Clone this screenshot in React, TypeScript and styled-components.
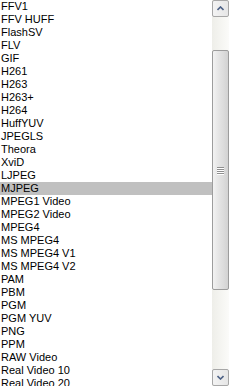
import React from 'react'
import styled, { createGlobalStyle } from 'styled-components'

const Global = createGlobalStyle`
  html, body { margin: 0; padding: 0; background: #fff; }
  body { font-family: Tahoma, "Liberation Sans", "DejaVu Sans", sans-serif; }
`

const codecs = [
  'FFV1', 'FFV HUFF', 'FlashSV', 'FLV', 'GIF', 'H261', 'H263', 'H263+', 'H264',
  'HuffYUV', 'JPEGLS', 'Theora', 'XviD', 'LJPEG', 'MJPEG', 'MPEG1 Video',
  'MPEG2 Video', 'MPEG4', 'MS MPEG4', 'MS MPEG4 V1', 'MS MPEG4 V2', 'PAM', 'PBM',
  'PGM', 'PGM YUV', 'PNG', 'PPM', 'RAW Video', 'Real Video 10', 'Real Video 20',
]

const ListBox = styled.div`
  width: 229px;
  height: 386px;
  display: flex;
  overflow: hidden;
  background: #fff;
`

const Items = styled.ul`
  flex: 1;
  margin: 0;
  padding: 0;
  list-style: none;
  overflow: hidden;
`

const Item = styled.li<{ $selected?: boolean }>`
  height: 13px;
  line-height: 13px;
  padding-left: 1px;
  font-size: 11px;
  color: #000;
  white-space: nowrap;
  background: ${p => (p.$selected ? '#c0c0c0' : 'transparent')};
`

const ScrollBar = styled.div`
  width: 17px;
  display: flex;
  flex-direction: column;
  background: linear-gradient(to right, #eeeee9, #fbfbf9);
`

const Arrow = styled.div`
  height: 17px;
  box-sizing: border-box;
  border: 1px solid #a7a7a7;
  border-radius: 2px;
  background: linear-gradient(to right, #f3f3f3, #e6e6e6);
  display: flex;
  align-items: center;
  justify-content: center;
`

const Track = styled.div<{ $size: number }>`
  flex: ${p => p.$size};
`

const Thumb = styled.div`
  height: 240px;
  box-sizing: border-box;
  border: 1px solid #9c9c9c;
  border-radius: 2px;
  background: linear-gradient(to right, #f2f2f2 0%, #e4e4e4 40%, #dcdcdc 70%, #d2d2d2 100%);
  display: flex;
  align-items: center;
  justify-content: center;
`

const Grip = styled.div`
  width: 7px;
  display: flex;
  flex-direction: column;
  gap: 1px;
  span {
    height: 1px;
    background: #8e8e8e;
    box-shadow: 0 1px 0 #fff;
  }
`

const Chevron = ({ up }: { up?: boolean }) => (
  <svg width="7" height="5" viewBox="0 0 7 5">
    <path
      d={up ? 'M0.5 4 L3.5 1 L6.5 4' : 'M0.5 1 L3.5 4 L6.5 1'}
      fill="none"
      stroke="#4d6185"
      strokeWidth="1.6"
    />
  </svg>
)

const App = () => (
  <>
    <Global />
    <ListBox>
      <Items>
        {codecs.map(c => (
          <Item key={c} $selected={c === 'MJPEG'}>{c}</Item>
        ))}
      </Items>
      <ScrollBar>
        <Arrow><Chevron up /></Arrow>
        <Track $size={33} />
        <Thumb>
          <Grip><span /><span /><span /><span /></Grip>
        </Thumb>
        <Track $size={79} />
        <Arrow><Chevron /></Arrow>
      </ScrollBar>
    </ListBox>
  </>
)

export default App
